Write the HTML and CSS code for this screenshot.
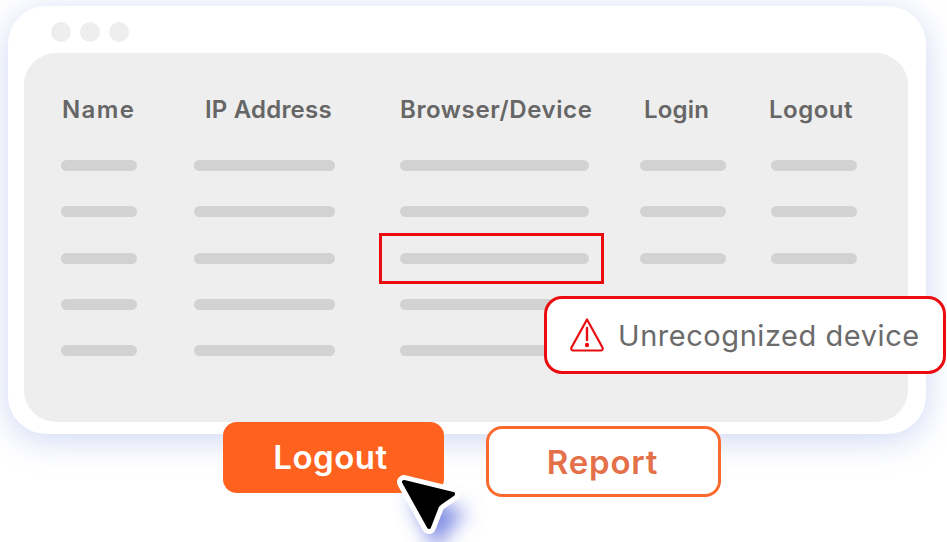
FILE: index.html
```html
<!DOCTYPE html>
<html>
  <head>
    <meta charset="UTF-8" />
    <meta name="viewport" content="width=device-width, initial-scale=1" />

    <link rel="stylesheet" href="styles.css">
  </head>
  <body>
    <div class="window">
      <div class="dots">
        <span class="dot"></span>
        <span class="dot"></span>
        <span class="dot"></span>
      </div>
      <div class="panel">
        <div class="row head">
          <div class="col-name">Name</div>
          <div class="col-ip">IP Address</div>
          <div class="col-browser">Browser/Device</div>
          <div class="col-login">Login</div>
          <div class="col-logout">Logout</div>
        </div>
        <div class="row">
          <span class="bar col-name"></span>
          <span class="bar col-ip"></span>
          <span class="bar col-browser"></span>
          <span class="bar col-login"></span>
          <span class="bar col-logout"></span>
        </div>
        <div class="row">
          <span class="bar col-name"></span>
          <span class="bar col-ip"></span>
          <span class="bar col-browser"></span>
          <span class="bar col-login"></span>
          <span class="bar col-logout"></span>
        </div>
        <div class="row">
          <span class="bar col-name"></span>
          <span class="bar col-ip"></span>
          <span class="bar col-browser"></span>
          <span class="bar col-login"></span>
          <span class="bar col-logout"></span>
        </div>
        <div class="row">
          <span class="bar col-name"></span>
          <span class="bar col-ip"></span>
          <span class="bar col-browser"></span>
          <span class="bar col-login"></span>
          <span class="bar col-logout"></span>
        </div>
        <div class="row">
          <span class="bar col-name"></span>
          <span class="bar col-ip"></span>
          <span class="bar col-browser"></span>
          <span class="bar col-login"></span>
          <span class="bar col-logout"></span>
        </div>
        <div class="highlight"></div>
      </div>
      <div class="alert">
        <svg class="alert-icon" viewBox="0 0 34 34" width="34" height="34">
          <path d="M17 1.5 L32.5 29.5 Q33.5 32.5 30.5 32.5 L3.5 32.5 Q0.5 32.5 1.5 29.5 Z" fill="none" stroke="#ea0c0f" stroke-width="2.2" stroke-linejoin="round" />
          <path d="M17 10 V22" fill="none" stroke="#ea0c0f" stroke-width="2.4" stroke-linecap="round" />
          <circle cx="17" cy="27" r="2.2" fill="#ea0c0f" />
        </svg>
        <span class="alert-text">Unrecognized device</span>
      </div>
    </div>

    <div class="actions">
      <div class="btn btn-logout">Logout</div>
      <div class="btn btn-report">Report</div>
    </div>

    <svg class="cursor" viewBox="0 0 100 71" width="100" height="71">
      <defs>
        <filter id="glow" x="-60%" y="-60%" width="220%" height="220%">
          <feGaussianBlur stdDeviation="10" />
        </filter>
      </defs>
      <path d="M18 24 L76 42 L56 56 L46 82 Z" fill="#6f7fe0" filter="url(#glow)" />
      <path d="M12 11 L61 23 L48 32 Q45 34 44 38 L37 56 Z" fill="#fff" stroke="#fff" stroke-width="14" stroke-linejoin="round" />
      <path d="M12 11 L61 23 L48 32 Q45 34 44 38 L37 56 Z" fill="#000" stroke="#000" stroke-width="4" stroke-linejoin="round" />
    </svg>
  </body>
</html>
```

FILE: styles.css
```css
* {
  box-sizing: border-box;
}
body {
  margin: 0px;
  padding: 6px 0px 0px 8px;
  height: 542px;
  overflow: hidden;
  background-color: white;
  font-family: Inter, "Noto Sans", sans-serif;
}

.window {
  position: relative;
  width: 918px;
  height: 428px;
  padding: 16px 18px 12px 16px;
  background-color: white;
  border-radius: 38px;
  box-shadow: 0 6px 32px rgba(130, 150, 225, 0.38);
}
.dots {
  display: flex;
  gap: 9px;
  height: 31px;
  margin-left: 27px;
}
.dot {
  width: 20px;
  height: 20px;
  border-radius: 50%;
  background-color: #eeeeee;
}

.panel {
  position: relative;
  height: 369px;
  padding: 43px 0px 0px 37px;
  background-color: #eeeeee;
  border-radius: 32px;
}
.row {
  display: flex;
  height: 46.25px;
}
.head {
  height: 64px;
  color: #666666;
  font-size: 24px;
  font-weight: 600;
  letter-spacing: 0.5px;
  line-height: 27px;
  white-space: nowrap;
}
.col-name {
  width: 76px;
  margin-right: 57px;
}
.col-ip {
  width: 141px;
  margin-right: 65px;
}
.col-browser {
  width: 189px;
  margin-right: 51px;
}
.col-login {
  width: 86px;
  margin-right: 45px;
}
.col-logout {
  width: 86px;
}
.head .col-name {
  padding-left: 1px;
  letter-spacing: 1.4px;
}
.head .col-ip {
  padding-left: 11px;
  letter-spacing: 0.2px;
}
.head .col-browser {
  letter-spacing: 0.6px;
}
.head .col-login {
  padding-left: 4px;
  letter-spacing: 0.2px;
}
.head .col-logout {
  margin-left: -2px;
}
.bar {
  height: 11px;
  border-radius: 6px;
  background-color: #d2d2d2;
}

.highlight {
  position: absolute;
  left: 355px;
  top: 180px;
  width: 225px;
  height: 51px;
  border: 3px solid #ea0c0f;
}

.alert {
  position: absolute;
  left: 536px;
  top: 290px;
  display: flex;
  align-items: center;
  gap: 14px;
  width: 402px;
  height: 78px;
  padding-left: 23px;
  background-color: white;
  border: 3px solid #ea0c0f;
  border-radius: 18px;
}
.alert-text {
  color: #6b6b6b;
  font-size: 29px;
  font-weight: 400;
  letter-spacing: 0.55px;
  white-space: nowrap;
}

.actions {
  position: relative;
  display: flex;
  align-items: flex-start;
  gap: 42px;
  margin: -12px 0px 0px 215px;
}
.btn {
  display: flex;
  align-items: center;
  justify-content: center;
  font-size: 33px;
  font-weight: 600;
}
.btn-logout {
  width: 221px;
  height: 71px;
  padding: 0px 6px 2px 0px;
  color: white;
  letter-spacing: 0.5px;
  background-color: #ff621f;
  border-radius: 14px;
}
.btn-report {
  width: 235px;
  height: 71px;
  margin-top: 4px;
  padding-right: 2px;
  color: #e4704a;
  letter-spacing: 0.8px;
  background-color: white;
  border: 3px solid #fb6a2d;
  border-radius: 16px;
}

.cursor {
  position: absolute;
  left: 392px;
  top: 471px;
}
```
